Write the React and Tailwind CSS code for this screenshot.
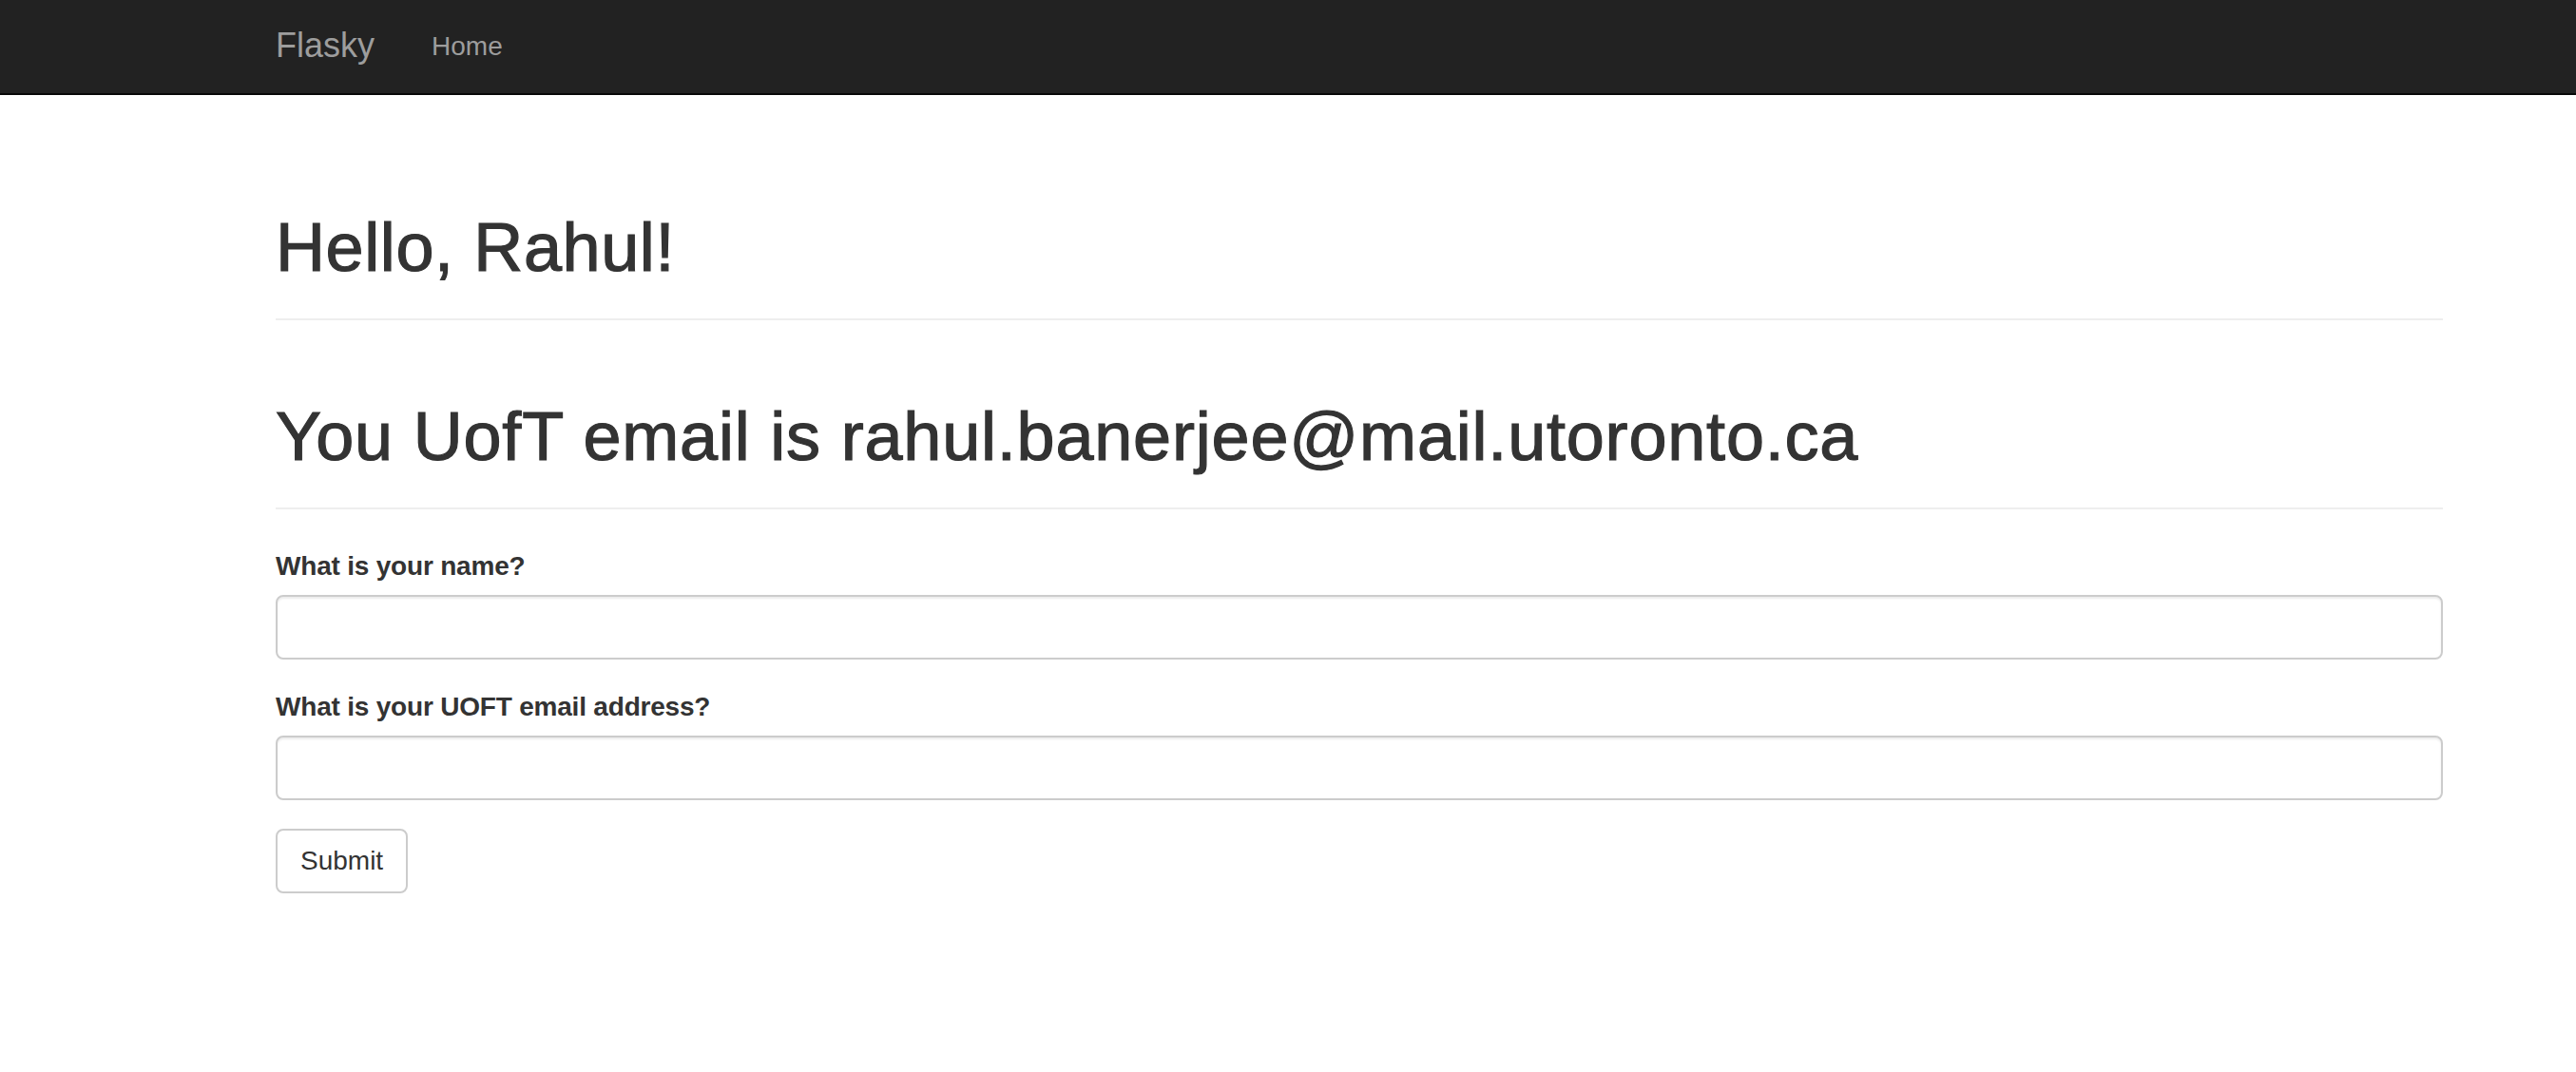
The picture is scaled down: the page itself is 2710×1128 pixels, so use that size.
export default function App() {
  const font = { fontFamily: '"Liberation Sans", Arial, Helvetica, sans-serif' };
  return (
    <div className="min-h-screen bg-white text-[#333]" style={font}>
      <nav className="h-[100px] bg-[#222] border-b-2 border-[#080808]">
        <div className="ml-[260px] w-[2340px] px-[30px] h-[98px] flex items-center">
          <a className="text-[36px] leading-[40px] text-[#9d9d9d] pr-[30px] pb-[3px]">Flasky</a>
          <a className="text-[28px] leading-[40px] text-[#9d9d9d] px-[30px]">Home</a>
        </div>
      </nav>
      <div className="ml-[260px] w-[2340px] px-[30px] pt-[121px]">
        <div className="pb-[18px] border-b-2 border-[#eee]">
          <h1 className="text-[72px] leading-[79px] font-medium mb-[17px] tracking-[0.6px] [-webkit-text-stroke:1.2px_#333]">Hello, Rahul!</h1>
        </div>
        <div className="mt-[83px] pb-[18px] border-b-2 border-[#eee]">
          <h1 className="text-[72px] leading-[79px] font-medium mb-[17px] tracking-[0.8px] [-webkit-text-stroke:1.2px_#333]">
            You UofT email is rahul.banerjee@mail.utoronto.ca
          </h1>
        </div>
        <form className="mt-[40px]" onSubmit={(e) => e.preventDefault()}>
          <div className="mb-[30px]">
            <label className="inline-block text-[28px] leading-[40px] font-bold mb-[10px] tracking-[-0.2px]">What is your name?</label>
            <input
              type="text"
              className="block w-full h-[68px] px-[24px] py-[12px] text-[28px] border-2 border-[#ccc] rounded-[8px] shadow-[inset_0_2px_2px_rgba(0,0,0,0.075)] outline-none"
            />
          </div>
          <div className="mb-[30px]">
            <label className="inline-block text-[28px] leading-[40px] font-bold mb-[10px] tracking-[-0.2px]">What is your UOFT email address?</label>
            <input
              type="text"
              className="block w-full h-[68px] px-[24px] py-[12px] text-[28px] border-2 border-[#ccc] rounded-[8px] shadow-[inset_0_2px_2px_rgba(0,0,0,0.075)] outline-none"
            />
          </div>
          <button
            type="submit"
            className="h-[68px] px-[24px] text-[28px] leading-[40px] border-2 border-[#ccc] rounded-[8px] bg-white text-[#333]"
          >
            Submit
          </button>
        </form>
      </div>
    </div>
  );
}
